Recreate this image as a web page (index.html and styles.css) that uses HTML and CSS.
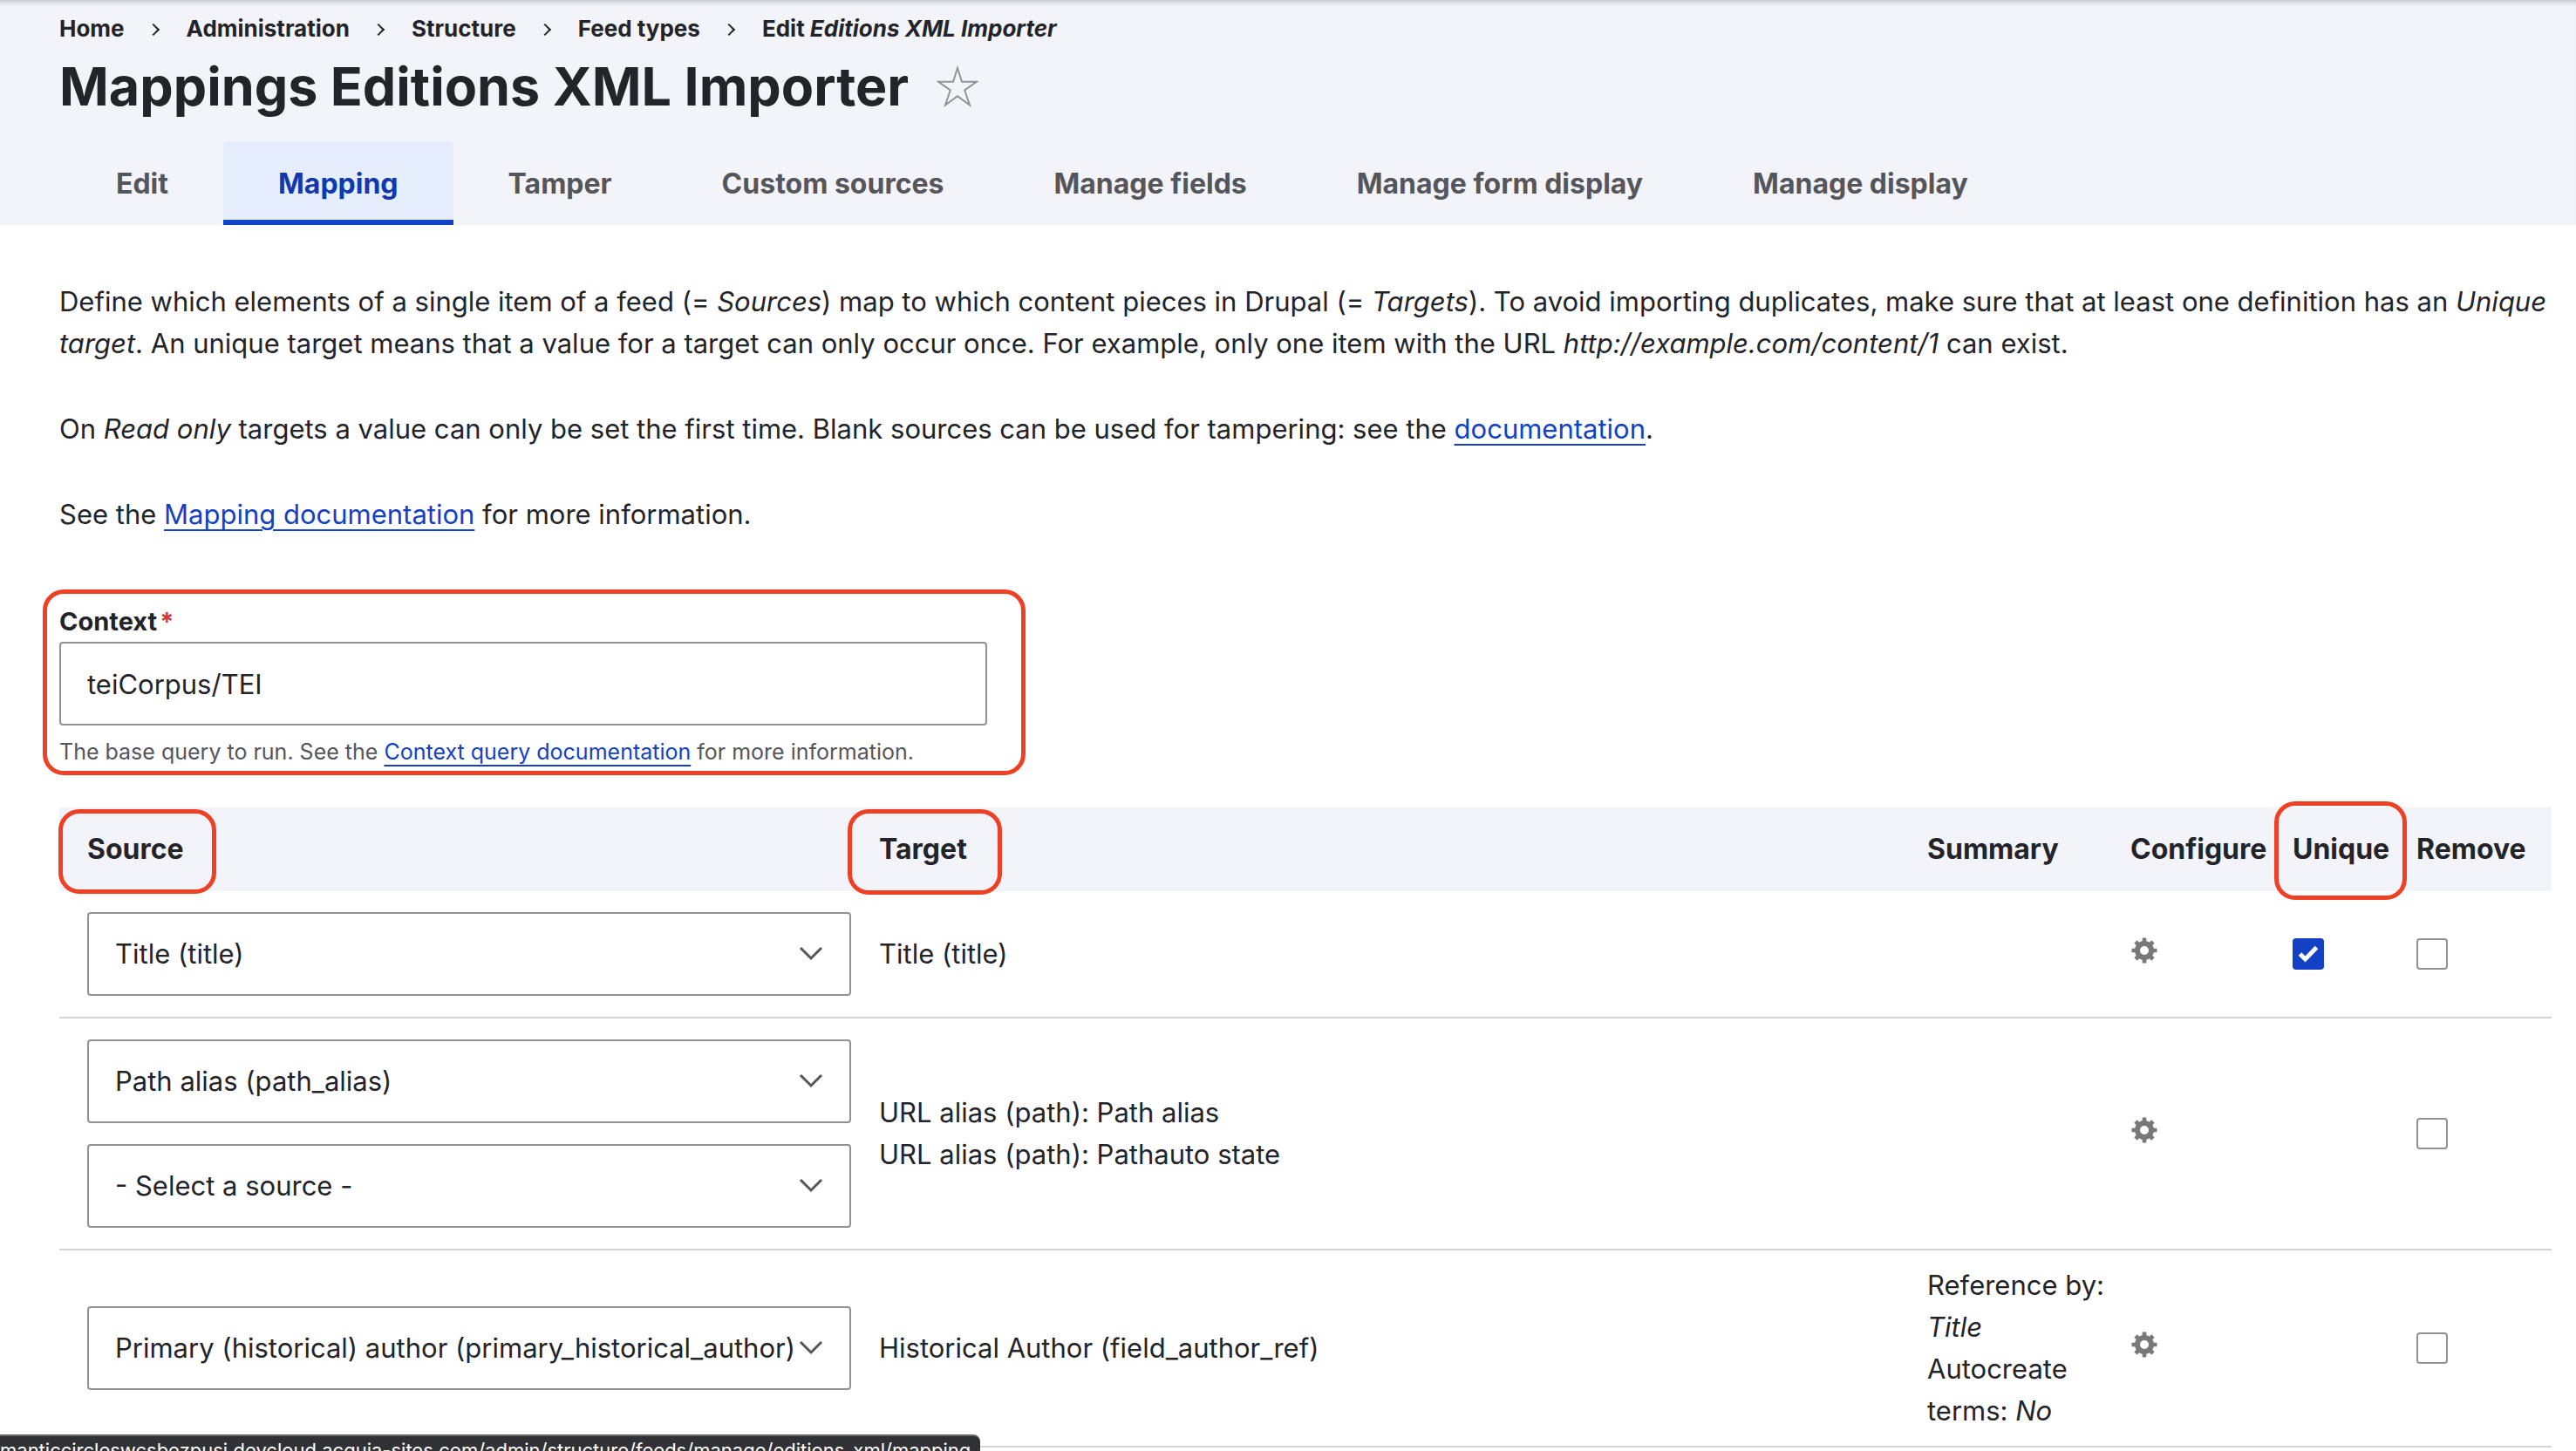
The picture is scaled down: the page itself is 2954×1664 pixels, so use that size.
FILE: index.html
```html
<!DOCTYPE html>
<html lang="en">
<head>
<meta charset="utf-8">
<title>Mappings Editions XML Importer</title>
<link rel="stylesheet" href="styles.css">
</head>
<body>
<header class="page-header">
  <nav aria-label="Breadcrumb">
    <ol class="breadcrumb">
      <li><a href="#">Home</a></li>
      <li><a href="#">Administration</a></li>
      <li><a href="#">Structure</a></li>
      <li><a href="#">Feed types</a></li>
      <li><a href="#">Edit <em>Editions XML Importer</em></a></li>
    </ol>
  </nav>
  <div class="title-row">
    <h1>Mappings Editions XML Importer</h1>
    <button class="star" type="button" aria-label="Add to shortcuts">
      <svg viewBox="0 0 48 48" width="48" height="48"><path d="M24 3 29 18.700H46L32.200 28.500 38 45.500 24 35.300 10 45.500 15.800 28.500 2 18.700H19Z" fill="none" stroke="#919297" stroke-width="2"/></svg>
    </button>
  </div>
  <nav class="tabs" aria-label="Tabs">
    <a href="#">Edit</a>
    <a href="#" class="active" aria-current="page">Mapping</a>
    <a href="#">Tamper</a>
    <a href="#">Custom sources</a>
    <a href="#">Manage fields</a>
    <a href="#">Manage form display</a>
    <a href="#">Manage display</a>
  </nav>
</header>
<main class="content">
  <div class="help">
    <p>Define which elements of a single item of a feed (= <em>Sources</em>) map to which content pieces in Drupal (= <em>Targets</em>). To avoid importing duplicates, make sure that at least one definition has an <em>Unique target</em>. An unique target means that a value for a target can only occur once. For example, only one item with the URL <em>http://example.com/content/1</em> can exist.</p>
    <p>On <em>Read only</em> targets a value can only be set the first time. Blank sources can be used for tampering: see the <a href="#">documentation</a>.</p>
    <p>See the <a href="#">Mapping documentation</a> for more information.</p>
  </div>
  <div class="context marked">
    <label for="context">Context<span class="required">*</span></label>
    <input id="context" type="text" value="teiCorpus/TEI">
    <p class="description">The base query to run. See the <a href="#">Context query documentation</a> for more information.</p>
  </div>
  <table class="mappings">
    <colgroup>
      <col class="col-source"><col><col class="col-summary"><col class="col-configure"><col class="col-unique"><col class="col-remove">
    </colgroup>
    <thead>
      <tr>
        <th scope="col"><span class="mark mark-source">Source</span></th>
        <th scope="col"><span class="mark mark-target">Target</span></th>
        <th scope="col">Summary</th>
        <th scope="col">Configure</th>
        <th scope="col"><span class="mark mark-unique">Unique</span></th>
        <th scope="col">Remove</th>
      </tr>
    </thead>
    <tbody>
      <tr>
        <td><div class="sources"><select aria-label="Source for title"><option>Title (title)</option></select></div></td>
        <td>Title (title)</td>
        <td></td>
        <td><button class="gear" type="button" aria-label="Configure"><svg viewBox="0 0 32 32" width="32" height="32"><use href="#gear"/></svg></button></td>
        <td><input type="checkbox" aria-label="Unique" checked></td>
        <td><input type="checkbox" aria-label="Remove"></td>
      </tr>
      <tr>
        <td><div class="sources"><select aria-label="Source for path alias"><option>Path alias (path_alias)</option></select><select aria-label="Source for pathauto state"><option>- Select a source -</option></select></div></td>
        <td>URL alias (path): Path alias<br>URL alias (path): Pathauto state</td>
        <td></td>
        <td><button class="gear" type="button" aria-label="Configure"><svg viewBox="0 0 32 32" width="32" height="32"><use href="#gear"/></svg></button></td>
        <td></td>
        <td><input type="checkbox" aria-label="Remove"></td>
      </tr>
      <tr>
        <td><div class="sources"><select aria-label="Source for historical author"><option>Primary (historical) author (primary_historical_author)</option></select></div></td>
        <td>Historical Author (field_author_ref)</td>
        <td>Reference by: <em>Title</em><br>Autocreate terms: <em>No</em></td>
        <td><button class="gear" type="button" aria-label="Configure"><svg viewBox="0 0 32 32" width="32" height="32"><use href="#gear"/></svg></button></td>
        <td></td>
        <td><input type="checkbox" aria-label="Remove"></td>
      </tr>
    </tbody>
  </table>
</main>
<div class="status-bar">manticcircleswcsbezpusi.devcloud.acquia-sites.com/admin/structure/feeds/manage/editions_xml/mapping</div>
<svg class="defs" width="0" height="0" aria-hidden="true">
  <defs>
    <g id="gear" fill="none" stroke="#787878">
      <circle cx="16" cy="16" r="8" stroke-width="6"/>
      <path d="M16 1.500V7M16 25V30.500M1.500 16H7M25 16H30.500M6 6 10 10M22 22 26 26M26 6 22 10M10 22 6 26" stroke-width="4.600"/>
    </g>
  </defs>
</svg>
</body>
</html>
```

FILE: styles.css
```css
* { box-sizing: border-box; }
html { overflow: hidden; }
body {
  margin: 0;
  height: 100vh;
  overflow: hidden;
  background: #fff;
  color: #232429;
  font-family: Inter, "Liberation Sans", sans-serif;
  font-size: 31px;
  line-height: 48px;
}
a { color: #1341c6; text-decoration-thickness: 2px; text-underline-offset: 6px; }

.page-header {
  padding: 12px 68px 0;
  background: #f3f4f9;
  box-shadow: inset 0 8px 6px -6px #bbbcc2;
}
.breadcrumb {
  display: flex;
  margin: 0;
  padding: 0;
  list-style: none;
  font-size: 26px;
  font-weight: 700;
  line-height: 42px;
}
.breadcrumb a { color: inherit; text-decoration: none; }
.breadcrumb li + li::before {
  content: "";
  display: inline-block;
  width: 8px;
  height: 8px;
  margin: 0 33px 3px 28px;
  border: solid #232429;
  border-width: 2px 2px 0 0;
  transform: rotate(45deg);
}
.title-row { display: flex; align-items: center; gap: 32px; height: 90px; }
h1 { margin: 0; font-size: 61px; line-height: 84px; font-weight: 700; }
.star { display: flex; padding: 0; border: 0; background: none; }
.tabs { display: flex; margin: 18px 0 0 2px; }
.tabs a {
  height: 96px;
  padding: 0 63px;
  border-bottom: 6px solid transparent;
  color: #55565b;
  font-size: 32px;
  font-weight: 700;
  line-height: 98px;
  text-decoration: none;
}
.tabs .active {
  border-radius: 4px 4px 0 0;
  border-bottom-color: #1341c6;
  background: #e6edfd;
  color: #1338ac;
}

.content { padding: 64px 24px 0 68px; }
.help { margin-bottom: 76px; }
.help p { margin: 0 0 50px; }

.marked, .mark { position: relative; }
.mark { display: inline-block; }
.marked::after, .mark::after {
  content: "";
  position: absolute;
  border: 5px solid #ee4025;
  border-radius: 24px;
  pointer-events: none;
}
.marked::after { inset: -14px -44px -9px -19px; }
.mark-source::after { inset: -22px -37px -27px -33px; }
.mark-target::after { inset: -22px -40px -28px -36px; }
.mark-unique::after { inset: -31px -20px -34px -21px; }

.context { width: 1064px; margin-bottom: 46px; }
.context label { display: block; font-size: 29px; font-weight: 700; line-height: 46px; }
.required { margin-left: 3px; color: #cc3a33; }
input[type="text"], select {
  display: block;
  width: 100%;
  height: 96px;
  padding: 0 30px;
  border: 2px solid #919297;
  border-radius: 4px;
  background: #fff;
  color: inherit;
  font: inherit;
}
.description { margin: 12px 0 0; color: #55565b; font-size: 25px; line-height: 36px; }

.mappings { width: calc(100% - 4px); border-collapse: collapse; table-layout: fixed; }
.col-source { width: 908px; }
.col-summary { width: 249px; }
.col-configure { width: 186px; }
.col-unique { width: 142px; }
.col-remove { width: 171px; }
th { height: 96px; padding: 0 0 0 32px; background: #f3f4f9; text-align: left; font-size: 32px; font-weight: 700; }
th:nth-child(n+4), td:nth-child(n+4) { padding-left: 16px; }
td { padding: 16px 0 16px 32px; border-bottom: 2px solid #d3d4d9; }
.sources { display: grid; gap: 24px; padding: 8px 0; }
select {
  appearance: none;
  padding-right: 0;
  background: #fff url("data:image/svg+xml,%3Csvg xmlns='http://www.w3.org/2000/svg' width='28' height='18' fill='none' stroke='%2355565b' stroke-width='3'%3E%3Cpath d='M2 2 14 14 26 2'/%3E%3C/svg%3E") no-repeat right 30px center;
}
input[type="checkbox"] {
  display: block;
  appearance: none;
  width: 36px;
  height: 36px;
  margin: 0;
  border: 2px solid #919297;
  border-radius: 4px;
  background: #fff;
}
input[type="checkbox"]:checked {
  border: 0;
  background: #1341c6 url("data:image/svg+xml,%3Csvg xmlns='http://www.w3.org/2000/svg' viewBox='0 0 36 36' fill='none' stroke='%23fff' stroke-width='5'%3E%3Cpath d='M8.500 18 14.500 24 27.500 10.500'/%3E%3C/svg%3E") center / 36px no-repeat;
}
.gear { display: block; margin: 0 0 8px; padding: 0; border: 0; background: none; }
.gear svg { display: block; }

.status-bar {
  position: fixed;
  left: 0;
  bottom: 0;
  width: 1124px;
  height: 19px;
  overflow: hidden;
  padding: 3px 10px 0 0;
  border-top: 2px solid #66676a;
  border-radius: 0 8px 0 0;
  background: #303134;
  color: #fff;
  font-size: 22px;
  line-height: 26px;
  white-space: nowrap;
}
.defs { position: absolute; }
```
